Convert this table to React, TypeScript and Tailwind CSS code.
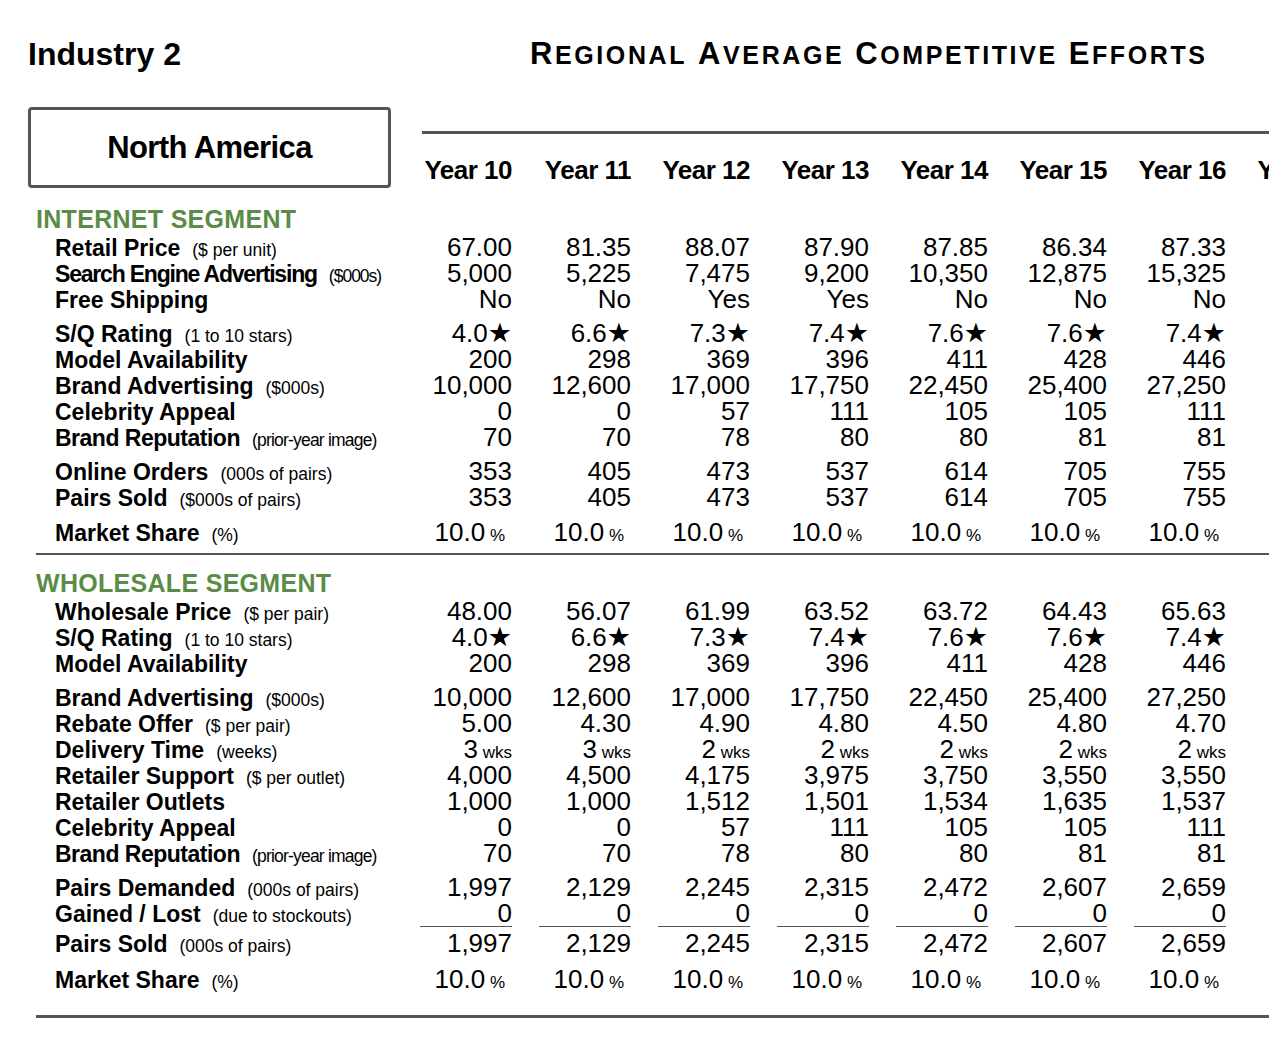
import React from "react";

type Kind = "num" | "star" | "wks" | "pct";
type Row = {
  label: string;
  sub?: string;
  lt?: string; // label tracking class
  st?: string; // sub tracking class
  kind?: Kind;
  vals: string[];
};

const seven = (v: string) => [v, v, v, v, v, v, v];

const internet: Row[][] = [
  [
    { label: "Retail Price", sub: "($ per unit)", vals: ["67.00", "81.35", "88.07", "87.90", "87.85", "86.34", "87.33"] },
    {
      label: "Search Engine Advertising",
      sub: "($000s)",
      lt: "tracking-[-1.2px]",
      st: "tracking-[-1px]",
      vals: ["5,000", "5,225", "7,475", "9,200", "10,350", "12,875", "15,325"],
    },
    { label: "Free Shipping", vals: ["No", "No", "Yes", "Yes", "No", "No", "No"] },
  ],
  [
    { label: "S/Q Rating", sub: "(1 to 10 stars)", kind: "star", vals: ["4.0", "6.6", "7.3", "7.4", "7.6", "7.6", "7.4"] },
    { label: "Model Availability", vals: ["200", "298", "369", "396", "411", "428", "446"] },
    { label: "Brand Advertising", sub: "($000s)", vals: ["10,000", "12,600", "17,000", "17,750", "22,450", "25,400", "27,250"] },
    { label: "Celebrity Appeal", vals: ["0", "0", "57", "111", "105", "105", "111"] },
    {
      label: "Brand Reputation",
      sub: "(prior-year image)",
      lt: "tracking-[-0.5px]",
      st: "tracking-[-0.8px]",
      vals: ["70", "70", "78", "80", "80", "81", "81"],
    },
  ],
  [
    { label: "Online Orders", sub: "(000s of pairs)", vals: ["353", "405", "473", "537", "614", "705", "755"] },
    { label: "Pairs Sold", sub: "($000s of pairs)", vals: ["353", "405", "473", "537", "614", "705", "755"] },
  ],
];

const wholesaleA: Row[][] = [
  [
    { label: "Wholesale Price", sub: "($ per pair)", vals: ["48.00", "56.07", "61.99", "63.52", "63.72", "64.43", "65.63"] },
    { label: "S/Q Rating", sub: "(1 to 10 stars)", kind: "star", vals: ["4.0", "6.6", "7.3", "7.4", "7.6", "7.6", "7.4"] },
    { label: "Model Availability", vals: ["200", "298", "369", "396", "411", "428", "446"] },
  ],
  [
    { label: "Brand Advertising", sub: "($000s)", vals: ["10,000", "12,600", "17,000", "17,750", "22,450", "25,400", "27,250"] },
    { label: "Rebate Offer", sub: "($ per pair)", vals: ["5.00", "4.30", "4.90", "4.80", "4.50", "4.80", "4.70"] },
    { label: "Delivery Time", sub: "(weeks)", kind: "wks", vals: ["3", "3", "2", "2", "2", "2", "2"] },
    { label: "Retailer Support", sub: "($ per outlet)", vals: ["4,000", "4,500", "4,175", "3,975", "3,750", "3,550", "3,550"] },
    { label: "Retailer Outlets", vals: ["1,000", "1,000", "1,512", "1,501", "1,534", "1,635", "1,537"] },
    { label: "Celebrity Appeal", vals: ["0", "0", "57", "111", "105", "105", "111"] },
    {
      label: "Brand Reputation",
      sub: "(prior-year image)",
      lt: "tracking-[-0.5px]",
      st: "tracking-[-0.8px]",
      vals: ["70", "70", "78", "80", "80", "81", "81"],
    },
  ],
  [
    { label: "Pairs Demanded", sub: "(000s of pairs)", vals: ["1,997", "2,129", "2,245", "2,315", "2,472", "2,607", "2,659"] },
    { label: "Gained / Lost", sub: "(due to stockouts)", vals: seven("0") },
  ],
];

const pairsSoldW: Row = {
  label: "Pairs Sold",
  sub: "(000s of pairs)",
  vals: ["1,997", "2,129", "2,245", "2,315", "2,472", "2,607", "2,659"],
};

const shareRow: Row = { label: "Market Share", sub: "(%)", kind: "pct", vals: seven("10.0") };

function Value({ v, kind }: { v: string; kind?: Kind }) {
  if (kind === "star")
    return (
      <>
        {v}
        <span className="font-['DejaVu_Sans',sans-serif] text-[27px] leading-[26px]">★</span>
      </>
    );
  if (kind === "wks")
    return (
      <>
        {v}
        <span className="text-[17px]"> wks</span>
      </>
    );
  if (kind === "pct")
    return (
      <span className="pr-[7px]">
        {v}
        <span className="text-[17px]"> %</span>
      </span>
    );
  return <>{v}</>;
}

function DataRow({ row }: { row: Row }) {
  return (
    <div className="flex h-[26px] items-baseline leading-[26px]">
      <div className="flex w-[393px] shrink-0 items-baseline pl-[55px]">
        <span className={`text-[23px] font-bold ${row.lt ?? ""}`}>{row.label}</span>
        {row.sub && <span className={`ml-3 text-[17.5px] ${row.st ?? ""}`}>{row.sub}</span>}
      </div>
      {row.vals.map((v, i) => (
        <div key={i} className="w-[119px] shrink-0 text-right text-[26px]">
          <Value v={v} kind={row.kind} />
        </div>
      ))}
    </div>
  );
}

function Groups({ groups }: { groups: Row[][] }) {
  return (
    <div className="flex flex-col gap-[8px]">
      {groups.map((g, i) => (
        <div key={i} className="flex flex-col">
          {g.map((r, j) => (
            <DataRow key={j} row={r} />
          ))}
        </div>
      ))}
    </div>
  );
}

function Title() {
  const words = ["REGIONAL", "AVERAGE", "COMPETITIVE", "EFFORTS"];
  return (
    <div className="flex items-baseline gap-[11px] font-bold tracking-[2.6px]">
      {words.map((w) => (
        <span key={w}>
          <span className="text-[31px]">{w[0]}</span>
          <span className="text-[25px]">{w.slice(1)}</span>
        </span>
      ))}
    </div>
  );
}

export default function App() {
  const years = ["Year 10", "Year 11", "Year 12", "Year 13", "Year 14", "Year 15", "Year 16", "Year 17"];
  return (
    <div className="h-[1058px] w-[1269px] overflow-hidden bg-white font-['Liberation_Sans',Arial,sans-serif] text-black">
      {/* top title row */}
      <div className="mt-[34px] flex h-[40px] items-center">
        <div className="w-[530px] shrink-0 pl-[28px] text-[32px] font-bold leading-[40px]">Industry 2</div>
        <Title />
      </div>

      {/* region box + year header */}
      <div className="mt-[33px] flex">
        <div className="w-[393px] shrink-0 pl-[28px]">
          <div className="flex h-[81px] w-[363px] items-center justify-center rounded-[4px] border-[3px] border-[#555]">
            <span className="mt-[2px] text-[31px] font-bold tracking-[-0.6px]">North America</span>
          </div>
        </div>
        <div className="flex flex-1 flex-col">
          <div className="ml-[29px] mt-[24px] h-[3px] w-[1000px] bg-[#555]" />
          <div className="mt-[21px] flex h-[30px] items-center">
            {years.map((y) => (
              <div key={y} className="w-[119px] shrink-0 text-right text-[26px] font-bold leading-[30px] tracking-[-0.5px]">
                {y}
              </div>
            ))}
          </div>
        </div>
      </div>

      {/* Internet segment */}
      <div className="ml-[36px] mt-[17px] h-[29px] text-[25px] font-bold leading-[28px] tracking-[0.3px] text-[#5a8c48]">
        INTERNET SEGMENT
      </div>
      <Groups groups={internet} />
      <div className="mt-[9px]">
        <DataRow row={shareRow} />
      </div>
      <div className="ml-[36px] mt-[8px] h-[1.5px] bg-[#555]" />

      {/* Wholesale segment */}
      <div className="ml-[36px] mt-[14px] h-[29px] text-[25px] font-bold leading-[28px] tracking-[0.3px] text-[#5a8c48]">
        WHOLESALE SEGMENT
      </div>
      <Groups groups={wholesaleA} />
      <div className="flex h-px">
        <div className="w-[393px] shrink-0" />
        {Array.from({ length: 7 }).map((_, i) => (
          <div key={i} className="w-[119px] shrink-0 pl-[27px]">
            <div className="h-px bg-[#555]" />
          </div>
        ))}
      </div>
      <div className="mt-[3px]">
        <DataRow row={pairsSoldW} />
      </div>
      <div className="mt-[10px]">
        <DataRow row={shareRow} />
      </div>
      <div className="ml-[36px] mt-[23px] h-[3px] bg-[#555]" />
    </div>
  );
}
